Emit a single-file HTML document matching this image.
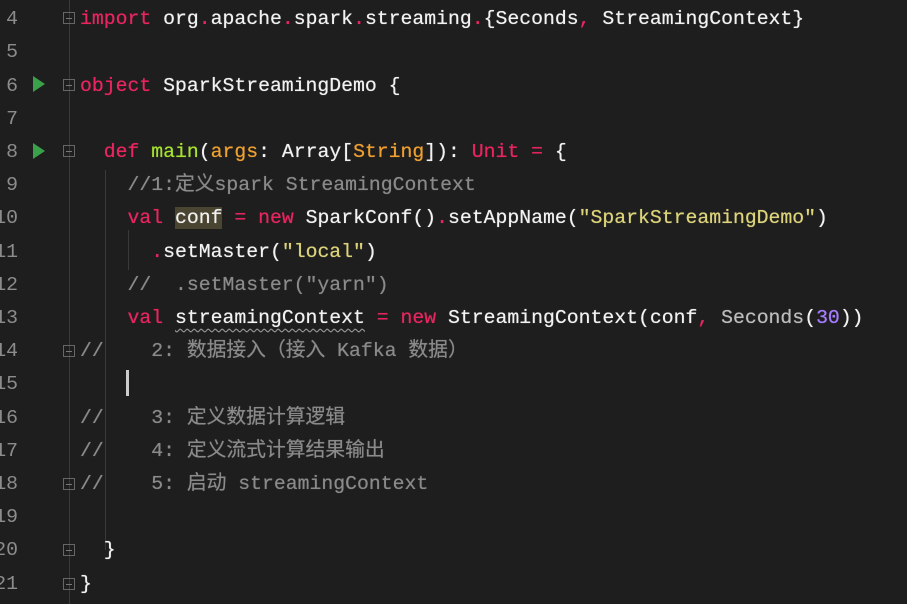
<!DOCTYPE html>
<html><head><meta charset="utf-8"><style>
html,body{margin:0;padding:0;background:#1e1e1f;width:907px;height:604px;overflow:hidden;position:relative;font-family:"Liberation Mono","Noto Sans CJK SC",monospace;}
.l{position:absolute;left:80px;height:33px;line-height:33px;font-size:19.8px;color:#f2f2f2;white-space:pre;text-shadow:0 0 0.6px currentColor;margin-top:2px}
.n{position:absolute;left:-10px;width:28px;text-align:right;font-size:19.8px;line-height:33px;color:#8c8c8c;font-family:"Liberation Mono",monospace;margin-top:2px}
.k{color:#e8255f}.f{color:#a6e22e}.o{color:#f0a030}.s{color:#dcd37a}.p{color:#a77dff}.c{color:#8a8a8a}.g{color:#bdbdbd}
.w{text-decoration:underline wavy #888;text-underline-offset:5px;text-decoration-thickness:1px}
.run{position:absolute;left:33px;width:0;height:0;border-left:12px solid #3aa04a;border-top:8px solid transparent;border-bottom:8px solid transparent}
.fold{position:absolute;left:63px;width:12px;height:12px;border:1px solid #666;box-sizing:border-box}
.fold:after{content:"";position:absolute;left:2px;top:5px;width:6px;height:1px;background:#777}
.vl{position:absolute;width:1px;background:#3a3a3a}
</style></head><body>
<div class="vl" style="left:69px;top:0;height:604px"></div>
<div class="vl" style="left:105px;top:170px;height:380px"></div>
<div class="vl" style="left:128px;top:230px;height:40px"></div>
<div class="n" style="top:1px">4</div>
<div class="n" style="top:34px">5</div>
<div class="n" style="top:68px">6</div>
<div class="n" style="top:101px">7</div>
<div class="n" style="top:134px">8</div>
<div class="n" style="top:167px">9</div>
<div class="n" style="top:200px">10</div>
<div class="n" style="top:234px">11</div>
<div class="n" style="top:267px">12</div>
<div class="n" style="top:300px">13</div>
<div class="n" style="top:333px">14</div>
<div class="n" style="top:366px">15</div>
<div class="n" style="top:400px">16</div>
<div class="n" style="top:433px">17</div>
<div class="n" style="top:466px">18</div>
<div class="n" style="top:499px">19</div>
<div class="n" style="top:532px">20</div>
<div class="n" style="top:566px">21</div>
<div class="run" style="top:76px"></div>
<div class="run" style="top:143px"></div>
<div class="fold" style="top:12px"></div>
<div class="fold" style="top:79px"></div>
<div class="fold" style="top:145px"></div>
<div class="fold" style="top:345px"></div>
<div class="fold" style="top:478px"></div>
<div class="fold" style="top:544px"></div>
<div class="fold" style="top:578px"></div>
<div class="l" style="top:1px"><span class="k">import</span> org<span class="k">.</span>apache<span class="k">.</span>spark<span class="k">.</span>streaming<span class="k">.</span>{Seconds<span class="k">,</span> StreamingContext}</div>
<div class="l" style="top:68px"><span class="k">object</span> SparkStreamingDemo {</div>
<div class="l" style="top:134px">  <span class="k">def</span> <span class="f">main</span>(<span class="o">args</span>: Array[<span class="o">String</span>]): <span class="k">Unit</span> <span class="k">=</span> {</div>
<div class="l c" style="top:167px">    //1:定义spark StreamingContext</div>
<div class="l" style="top:200px">    <span class="k">val</span> <span style="background:#4a4530">conf</span> <span class="k">=</span> <span class="k">new</span> SparkConf()<span class="k">.</span>setAppName(<span class="s">"SparkStreamingDemo"</span>)</div>
<div class="l" style="top:234px">      <span class="k">.</span>setMaster(<span class="s">"local"</span>)</div>
<div class="l c" style="top:267px">    //  .setMaster("yarn")</div>
<div class="l" style="top:300px">    <span class="k">val</span> <span class="w">streamingContext</span> <span class="k">=</span> <span class="k">new</span> StreamingContext(conf<span class="k">,</span> <span class="g">Seconds</span>(<span class="p">30</span>))</div>
<div class="l c" style="top:333px">//    2: 数据接入（接入 Kafka 数据）</div>
<div style="position:absolute;left:126px;top:370px;width:3px;height:26px;background:#ccc"></div>
<div class="l c" style="top:400px">//    3: 定义数据计算逻辑</div>
<div class="l c" style="top:433px">//    4: 定义流式计算结果输出</div>
<div class="l c" style="top:466px">//    5: 启动 streamingContext</div>
<div class="l" style="top:532px">  }</div>
<div class="l" style="top:566px">}</div>
</body></html>
